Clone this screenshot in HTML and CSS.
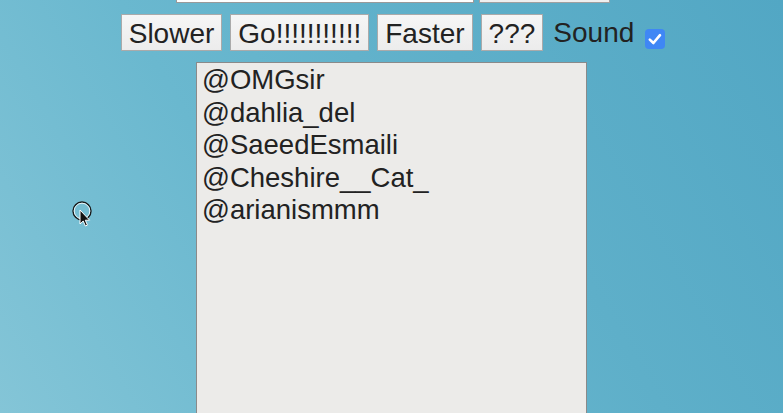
FILE: index.html
```html
<!DOCTYPE html>
<html>
<head>
<meta charset="utf-8">
<link rel="stylesheet" href="styles.css">
</head>
<body>
<div class="page">
  <div class="top-row">
    <input class="field-main" type="text">
    <button class="field-side" type="button"></button>
  </div>
  <div class="controls">
    <button class="btn" type="button">Slower</button>
    <button class="btn" type="button">Go!!!!!!!!!!!</button>
    <button class="btn" type="button">Faster</button>
    <button class="btn" type="button">???</button>
    <span class="sound-label">Sound</span>
    <span class="check" role="checkbox" aria-checked="true">
      <svg viewBox="0 0 20 20" width="20" height="20"><path d="M4.8 10.6 L8.4 14 L15 6.2" fill="none" stroke="#fff" stroke-width="2.6" stroke-linecap="round" stroke-linejoin="round"/></svg>
    </span>
  </div>
  <textarea class="names">@OMGsir
@dahlia_del
@SaeedEsmaili
@Cheshire__Cat_
@arianismmm</textarea>
</div>
<svg class="cursor" width="30" height="30" viewBox="0 0 30 30">
  <circle cx="11" cy="11" r="9" fill="none" stroke="#1a1a1a" stroke-width="1.4"/>
  <circle cx="11" cy="11" r="7.8" fill="none" stroke="#e8f4f8" stroke-width="1"/>
  <path d="M9 10 L9 24 L12.2 21 L14.4 26 L16.4 25.1 L14.3 20.2 L18.6 20.2 Z" fill="#111" stroke="#fff" stroke-width="1"/>
</svg>
</body>
</html>
```
FILE: styles.css
```css
html, body {
  margin: 0;
  padding: 0;
  height: 100%;
  overflow: hidden;
}
body {
  background: linear-gradient(60deg, #84c5d7 0%, #6ab8cf 35%, #5eafc9 65%, #52a7c4 100%);
  font-family: "Liberation Sans", Arial, sans-serif;
  color: #222;
}
.page {
  display: flex;
  flex-direction: column;
  align-items: center;
}
.top-row {
  display: flex;
  gap: 5px;
  margin-top: -33px;
  padding-left: 2px;
}
.field-main {
  width: 298px;
  height: 36px;
  box-sizing: border-box;
  border: 1px solid #9a9a9a;
  background: #fff;
  margin: 0;
}
.field-side {
  width: 131px;
  height: 36px;
  box-sizing: border-box;
  border: 1px solid #a0a0a0;
  background: #efefef;
  margin: 0;
}
.controls {
  display: flex;
  align-items: flex-start;
  gap: 8px;
  margin-top: 11px;
  padding-left: 3px;
}
.btn {
  height: 37px;
  box-sizing: border-box;
  margin: 0;
  padding: 2px 7px 0;
  border: 1px solid #aaaaaa;
  border-radius: 0;
  background: linear-gradient(#f6f6f6, #ececec);
  font-family: "Liberation Sans", Arial, sans-serif;
  font-size: 28px;
  line-height: 33px;
  color: #222;
}
.sound-label {
  font-size: 28px;
  line-height: 38px;
  margin-left: 2px;
  color: #222;
}
.check {
  width: 20px;
  height: 20px;
  margin-top: 15px;
  margin-left: 3px;
  border-radius: 4px;
  background: #3f87f5;
  display: flex;
}
.names {
  margin-top: 10px;
  width: 391px;
  height: 400px;
  box-sizing: border-box;
  border: 1px solid #8a8a8a;
  background: #ecebe9;
  padding: 1px 5px;
  font-family: "Liberation Sans", Arial, sans-serif;
  font-size: 27.5px;
  line-height: 32.5px;
  color: #222;
  resize: none;
  outline: none;
}
.cursor {
  position: absolute;
  left: 71px;
  top: 200px;
}
```
